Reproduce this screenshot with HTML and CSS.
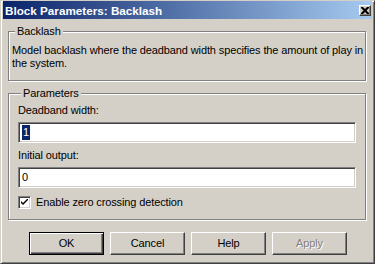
FILE: index.html
```html
<!DOCTYPE html>
<html lang="en">
  <head>
    <meta charset="UTF-8" />
    <title>Block Parameters: Backlash</title>
    <link rel="stylesheet" href="styles.css">
  </head>
  <body>
    <div class="window">
      <div class="titlebar">
        <span class="title">Block Parameters: Backlash</span>
        <div class="close">
          <svg width="8" height="7" viewBox="0 0 8 7">
            <path d="M0 0h2l2 2 2-2h2v1l-2.5 2.5 2.5 2.5v1h-2l-2-2-2 2h-2v-1l2.5-2.5-2.5-2.5z" fill="#000" />
          </svg>
        </div>
      </div>
      <div class="content">
        <fieldset class="group desc">
          <legend>Backlash</legend>
          <p>Model backlash where the deadband width specifies the amount of play in<br>the system.</p>
        </fieldset>
        <fieldset class="group params">
          <legend>Parameters</legend>
          <div class="label first">Deadband width:</div>
          <div class="field"><span class="sel">1</span></div>
          <div class="label">Initial output:</div>
          <div class="field"><span>0</span></div>
          <div class="check">
            <span class="box">
              <svg width="7" height="7" viewBox="0 0 7 7">
                <path d="M0 2l2 2 5-5v2l-5 5-2-2z" fill="#000" />
              </svg>
            </span>
            <span>Enable zero crossing detection</span>
          </div>
        </fieldset>
        <div class="buttons">
          <div class="btn default">OK</div>
          <div class="btn">Cancel</div>
          <div class="btn">Help</div>
          <div class="btn disabled">Apply</div>
        </div>
      </div>
    </div>
  </body>
</html>
```

FILE: styles.css
```css
* {
  box-sizing: border-box;
}
body {
  margin: 0;
  overflow: hidden;
  background-color: #d4d0c8;
  font-family: "Liberation Sans", Arial, sans-serif;
  font-size: 11px;
  line-height: 13px;
  letter-spacing: -0.12px;
  color: #000;
}
.window {
  width: 375px;
  height: 264px;
  border: 1px solid;
  border-color: #d4d0c8 #404040 #404040 #d4d0c8;
  box-shadow: inset 1px 1px 0 #fff, inset -1px -1px 0 #808080;
  padding: 0 2px 2px 2px;
  display: flex;
  flex-direction: column;
}
.titlebar {
  height: 18px;
  background: linear-gradient(to right, #0a246a, #a6caf0);
  display: flex;
  align-items: center;
  justify-content: space-between;
  padding: 0 1px 0 2px;
}
.title {
  color: #fff;
  font-weight: bold;
  font-size: 11.7px;
  letter-spacing: 0;
}
.close {
  width: 12px;
  height: 11px;
  background-color: #d4d0c8;
  border: 1px solid;
  border-color: #fff #404040 #404040 #fff;
  box-shadow: inset -1px -1px 0 #808080;
  display: flex;
  align-items: center;
  justify-content: center;
}
.close svg {
  display: block;
}
.content {
  flex: 1;
  padding: 6px 6px 0 5px;
}
.group {
  margin: 0;
  border: 1px solid #808080;
  box-shadow: inset 1px 1px 0 #fff, 1px 1px 0 #fff;
  padding: 0 3px 10px 3px;
  min-width: 0;
}
.group legend {
  padding: 0 2px;
  margin-left: 3px;
  background-color: #d4d0c8;
  line-height: 13px;
}
.desc p {
  margin: 6px 0 0 0;
  white-space: nowrap;
}
.params {
  margin-top: 6px;
  padding: 0 9px 10px 9px;
}
.label {
  margin-top: 6px;
}
.label.first {
  margin-top: 4px;
}
.field {
  height: 21px;
  margin-top: 5px;
  background-color: #fff;
  border: 1px solid;
  border-color: #808080 #fff #fff #808080;
  box-shadow: inset 1px 1px 0 #404040, inset -1px -1px 0 #d4d0c8;
  padding: 2px 3px;
  line-height: 15px;
}
.sel {
  display: inline-block;
  background-color: #0a246a;
  color: #fff;
  padding: 0 1px;
}
.check {
  display: flex;
  align-items: center;
  gap: 5px;
  margin-top: 8px;
}
.box {
  width: 13px;
  height: 13px;
  background-color: #fff;
  border: 1px solid;
  border-color: #808080 #fff #fff #808080;
  box-shadow: inset 1px 1px 0 #404040, inset -1px -1px 0 #d4d0c8;
  display: flex;
  align-items: center;
  justify-content: center;
}
.box svg {
  display: block;
}
.buttons {
  display: flex;
  gap: 6px;
  padding-left: 21px;
  margin-top: 12px;
}
.btn {
  width: 75px;
  height: 23px;
  border: 1px solid;
  border-color: #fff #404040 #404040 #fff;
  box-shadow: inset -1px -1px 0 #808080;
  display: flex;
  align-items: center;
  justify-content: center;
}
.btn.default {
  border-color: #000;
  box-shadow: inset 1px 1px 0 #fff, inset -1px -1px 0 #404040, inset -2px -2px 0 #808080;
}
.btn.disabled {
  color: #808080;
  text-shadow: 1px 1px 0 #fff;
}
```
